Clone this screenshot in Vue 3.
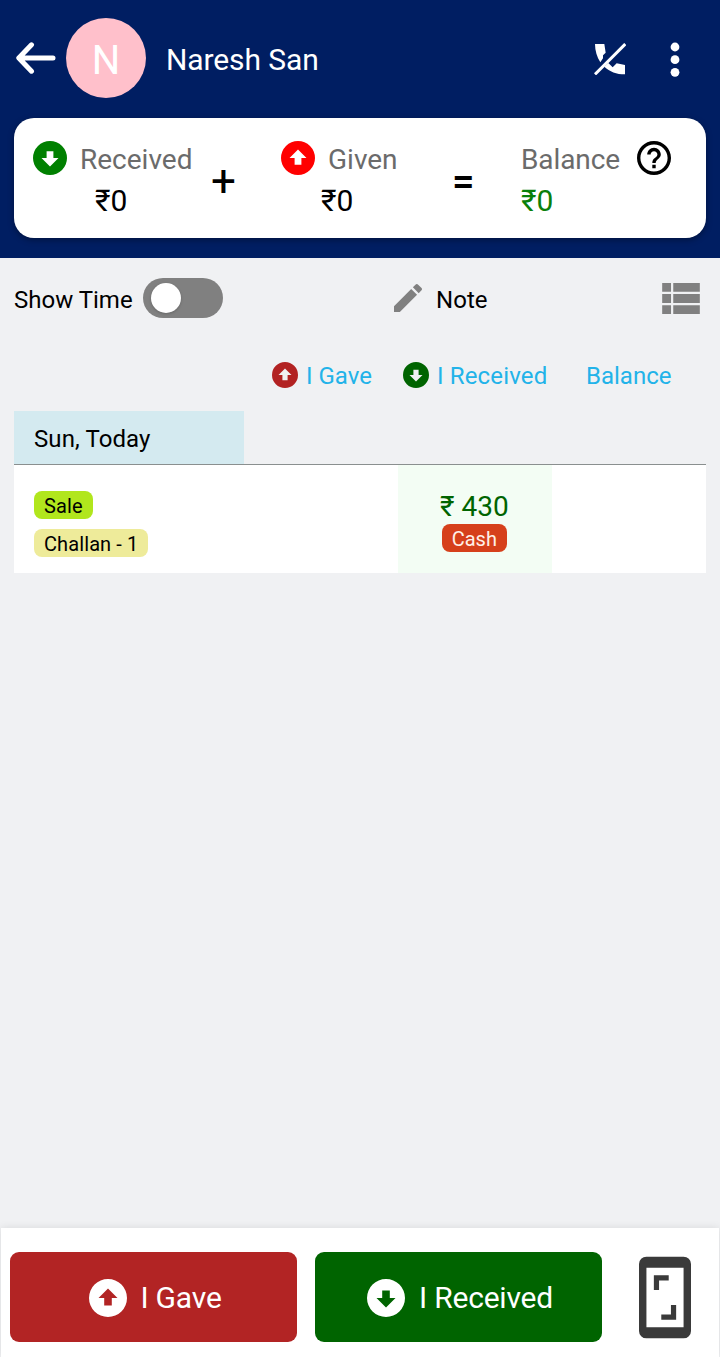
<script setup>
import { ref } from "vue";

const customer = { name: "Naresh San", initial: "N" };
const showTime = ref(false);

const arrowDown =
  "M12 2a10 10 0 0 1 10 10 10 10 0 0 1-10 10A10 10 0 0 1 2 12 10 10 0 0 1 12 2m0 15l5-5h-3V8h-4v4H7l5 5z";
const arrowUp =
  "M12 22A10 10 0 0 1 2 12 10 10 0 0 1 12 2a10 10 0 0 1 10 10 10 10 0 0 1-10 10m0-15l-5 5h3v4h4v-4h3l-5-5z";

const entries = [
  { id: 1, type: "Sale", bill: "Challan - 1", received: "₹ 430", mode: "Cash" }
];
</script>

<template>
  <div class="screen">
    <header class="header">
      <div class="top-bar">
        <svg class="back-icon" viewBox="0 0 42 32">
          <path d="M17.5 2.8L4.8 16l12.7 13.2M5 16h34" />
        </svg>
        <div class="avatar">{{ customer.initial }}</div>
        <h1 class="customer-name">{{ customer.name }}</h1>
        <svg class="call-icon" viewBox="0 0 96 96">
          <path d="M3 3h28l4 26-8 8v9l-8 12C9 42 3 24 3 3z" />
          <path d="M93 94V66l-25-5-12 12-13-13-12 11c16 15 36 23 62 23z" />
          <path class="slash" d="M94 3L3 94" />
        </svg>
        <svg class="menu-icon" viewBox="0 0 10 36">
          <circle cx="5" cy="5" r="4.4" />
          <circle cx="5" cy="17.7" r="4.4" />
          <circle cx="5" cy="30.3" r="4.4" />
        </svg>
      </div>

      <section class="summary-card">
        <div class="summary-item received">
          <div class="summary-label">
            <svg class="summary-icon" viewBox="2 2 20 20"><path :d="arrowDown" /></svg>
            <span>Received</span>
          </div>
          <strong>₹0</strong>
        </div>
        <span class="operator plus">+</span>
        <div class="summary-item given">
          <div class="summary-label">
            <svg class="summary-icon" viewBox="2 2 20 20"><path :d="arrowUp" /></svg>
            <span>Given</span>
          </div>
          <strong>₹0</strong>
        </div>
        <span class="operator equals">=</span>
        <div class="summary-item balance">
          <div class="summary-label">
            <span>Balance</span>
            <svg class="help-icon" viewBox="2 2 20 20">
              <path d="M11 18h2v-2h-2v2zm1-16C6.48 2 2 6.48 2 12s4.48 10 10 10 10-4.48 10-10S17.52 2 12 2zm0 18c-4.41 0-8-3.59-8-8s3.59-8 8-8 8 3.59 8 8-3.59 8-8 8zm0-14c-2.21 0-4 1.79-4 4h2c0-1.1.9-2 2-2s2 .9 2 2c0 2-3 1.75-3 5h2c0-2.25 3-2.5 3-5 0-2.21-1.79-4-4-4z" />
            </svg>
          </div>
          <strong>₹0</strong>
        </div>
      </section>
    </header>

    <main class="content">
      <div class="toolbar">
        <span class="toolbar-text">Show Time</span>
        <button
          type="button"
          class="toggle"
          :class="{ on: showTime }"
          @click="showTime = !showTime"
        >
          <span class="knob"></span>
        </button>
        <div class="note">
          <svg class="edit-icon" viewBox="3 3 18 18">
            <path d="M3 17.25V21h3.75L17.81 9.94l-3.75-3.75L3 17.25zM20.71 7.04c.39-.39.39-1.02 0-1.41l-2.34-2.34c-.39-.39-1.02-.39-1.41 0l-1.83 1.83 3.75 3.75 1.83-1.83z" />
          </svg>
          <span class="toolbar-text">Note</span>
        </div>
        <svg class="list-icon" viewBox="4 5 17 14">
          <path d="M4 14h4v-4H4v4zm0 5h4v-4H4v4zM4 9h4V5H4v4zm5 5h12v-4H9v4zm0 5h12v-4H9v4zM9 5v4h12V5H9z" />
        </svg>
      </div>

      <div class="column-heads">
        <div class="column-head gave">
          <svg viewBox="2 2 20 20"><path :d="arrowUp" /></svg>
          <span>I Gave</span>
        </div>
        <div class="column-head got">
          <svg viewBox="2 2 20 20"><path :d="arrowDown" /></svg>
          <span>I Received</span>
        </div>
        <div class="column-head total"><span>Balance</span></div>
      </div>

      <div class="date-label">Sun, Today</div>
      <div class="entries">
        <div v-for="entry in entries" :key="entry.id" class="entry">
          <div class="entry-info">
            <span class="tag sale">{{ entry.type }}</span>
            <span class="tag bill">{{ entry.bill }}</span>
          </div>
          <div class="entry-received">
            <span class="amount">{{ entry.received }}</span>
            <span class="tag mode">{{ entry.mode }}</span>
          </div>
          <div></div>
        </div>
      </div>
    </main>

    <footer class="footer">
      <button type="button" class="action gave-button">
        <svg viewBox="2 2 20 20"><path :d="arrowUp" /></svg>
        <span>I Gave</span>
      </button>
      <button type="button" class="action received-button">
        <svg viewBox="2 2 20 20"><path :d="arrowDown" /></svg>
        <span>I Received</span>
      </button>
      <svg class="capture-icon" viewBox="5 1 14 22">
        <path fill-rule="evenodd" d="M7 1h10a2 2 0 0 1 2 2v18a2 2 0 0 1-2 2H7a2 2 0 0 1-2-2V3a2 2 0 0 1 2-2zm0 3v16h10V4H7zm2 2h4v1.4h-2.6V10H9V6zm6 12h-4v-1.4h2.6V14H15v4z" />
      </svg>
    </footer>
  </div>
</template>

<style>
body {
  margin: 0;
}
</style>

<style scoped>
.screen {
  display: flex;
  flex-direction: column;
  width: 720px;
  height: 1357px;
  overflow: hidden;
  background: #f0f1f3;
  color: #000;
  font-family: Roboto, "Liberation Sans", sans-serif;
}

.screen svg {
  display: block;
  flex-shrink: 0;
}

.header {
  height: 258px;
  background: #001e62;
}

.top-bar {
  display: flex;
  align-items: center;
  height: 118px;
  padding: 0 40px 0 14px;
  box-sizing: border-box;
}

.back-icon {
  width: 42px;
  height: 32px;
  margin-top: -2px;
  fill: none;
  stroke: #fff;
  stroke-width: 5;
  stroke-linecap: round;
  stroke-linejoin: round;
}

.avatar {
  width: 80px;
  height: 80px;
  margin: -2px 0 0 10px;
  border-radius: 50%;
  background: #ffc0cb;
  color: #fff;
  font-size: 40px;
  line-height: 85px;
  text-align: center;
}

.customer-name {
  flex: 1;
  margin: 2px 0 0 20px;
  color: #fff;
  font-size: 30px;
  font-weight: 400;
  letter-spacing: -0.1px;
  line-height: 36px;
}

.call-icon {
  width: 32px;
  height: 32px;
  margin-right: 44px;
  fill: #fff;
}

.slash {
  stroke: #fff;
  stroke-width: 9;
}

.menu-icon {
  width: 10px;
  height: 36px;
  margin-top: 1px;
  fill: #fff;
}

.summary-card {
  display: flex;
  height: 120px;
  margin: 0 14px;
  padding: 20px 0 0 19px;
  box-sizing: border-box;
  border-radius: 20px;
  background: #fff;
  box-shadow: 0 2px 6px rgba(0, 0, 0, 0.35);
}

.summary-item {
  display: flex;
  flex-direction: column;
}

.summary-label {
  display: flex;
  align-items: center;
  height: 40px;
  color: #6b6b6b;
  font-size: 28px;
  line-height: 40px;
}

.summary-label span {
  padding-top: 4px;
}

.summary-item strong {
  font-size: 30px;
  font-weight: 400;
  line-height: 45px;
}

.received {
  width: 178px;
}

.given {
  width: 172px;
}

.received strong {
  padding-left: 62px;
}

.given strong {
  padding-left: 40px;
}

.balance .summary-label span {
  letter-spacing: -0.1px;
}

.balance strong {
  color: #0a800a;
}

.summary-icon {
  width: 34px;
  height: 34px;
  margin-right: 13px;
}

.received .summary-icon {
  fill: #008000;
}

.given .summary-icon {
  fill: #f00;
}

.help-icon {
  width: 34px;
  height: 34px;
  margin-left: 17px;
}

.operator {
  font-size: 44px;
  font-weight: 400;
  line-height: 87px;
}

.plus {
  width: 70px;
}

.equals {
  width: 69px;
  margin-left: -1px;
  font-size: 40px;
  font-weight: 500;
  line-height: 87px;
}

.content {
  flex: 1;
  padding: 0 14px;
}

.toolbar {
  display: flex;
  align-items: center;
  height: 80px;
}

.toolbar-text {
  padding-top: 3px;
  font-size: 24px;
  line-height: 30px;
}

.toggle {
  width: 80px;
  height: 40px;
  margin-left: 10px;
  padding: 5px 8px;
  border: none;
  border-radius: 20px;
  background: #808080;
  cursor: pointer;
}

.knob {
  display: block;
  width: 30px;
  height: 30px;
  border-radius: 50%;
  background: #fff;
  box-shadow: 0 1px 3px rgba(0, 0, 0, 0.2);
}

.toggle.on .knob {
  margin-left: auto;
}

.note {
  display: flex;
  flex: 1;
  align-items: center;
  gap: 14.5px;
  margin-left: 171px;
}

.edit-icon {
  width: 28px;
  height: 28px;
  fill: #808080;
}

.list-icon {
  width: 38px;
  height: 31px;
  margin-right: 6px;
  fill: #808080;
}

.column-heads {
  display: flex;
  height: 73px;
  padding-left: 258px;
  align-items: center;
  color: #22b3e9;
  font-size: 24px;
  line-height: 30px;
}

.column-head {
  display: flex;
  align-items: center;
  gap: 8px;
  padding-top: 1px;
  white-space: nowrap;
}

.column-head span {
  padding-top: 1px;
}

.column-head svg {
  width: 26px;
  height: 26px;
}

.gave {
  width: 131px;
}

.gave svg {
  fill: #b22222;
}

.got {
  width: 183px;
  letter-spacing: 0.15px;
}

.got svg {
  fill: #006400;
}

.date-label {
  width: 230px;
  height: 53px;
  padding-left: 20px;
  box-sizing: border-box;
  background: #d4eaf0;
  font-size: 24px;
  letter-spacing: 0.1px;
  line-height: 56px;
}

.entries {
  border-top: 1px solid #8a8f8f;
}

.entry {
  display: grid;
  grid-template-columns: 5fr 2fr 2fr;
  height: 108px;
  background: #fff;
}

.entry-info {
  display: flex;
  flex-direction: column;
  align-items: flex-start;
  gap: 10px;
  padding: 26px 0 0 20px;
}

.entry-received {
  display: flex;
  flex-direction: column;
  align-items: center;
  padding: 24px 2px 0 0;
  background: #f3fdf4;
}

.amount {
  height: 35px;
  color: #006400;
  font-size: 28px;
  line-height: 36px;
}

.tag {
  height: 28px;
  padding: 0 10px;
  border-radius: 8px;
  font-size: 20px;
  line-height: 30px;
}

.sale {
  background: #b1e61d;
  letter-spacing: 0.15px;
}

.bill {
  background: #eeeb9a;
  letter-spacing: 0.1px;
}

.mode {
  background: #d6401b;
  color: #fff0e8;
}

.footer {
  display: flex;
  align-items: center;
  height: 129px;
  margin: 0 1px;
  padding: 9px 0 0 9px;
  box-sizing: border-box;
  background: #fff;
  box-shadow: 0 0 8px rgba(0, 0, 0, 0.1);
}

.action {
  display: flex;
  align-items: center;
  justify-content: center;
  gap: 14px;
  width: 287px;
  height: 90px;
  margin-right: 18px;
  padding: 2px 0 0 3px;
  border: none;
  border-radius: 9px;
  color: #fff;
  font-family: inherit;
  font-size: 30px;
  letter-spacing: -0.2px;
  line-height: 36px;
  cursor: pointer;
}

.action svg {
  width: 38px;
  height: 38px;
  fill: #fff;
}

.gave-button {
  gap: 13px;
  padding-left: 4px;
  background: #b22424;
}

.received-button {
  background: #006400;
}

.capture-icon {
  width: 52px;
  height: 83px;
  margin: 1px 0 0 19px;
  fill: #3a3a3a;
}
</style>
